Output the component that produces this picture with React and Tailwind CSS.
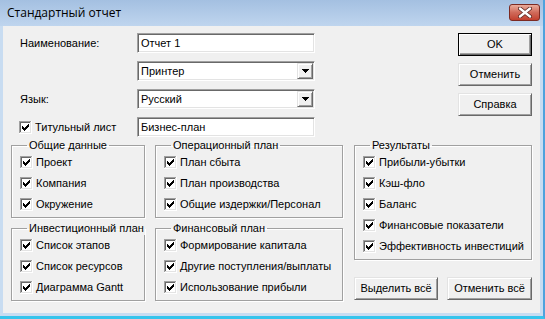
import React from 'react';

const sunken =
  'bg-white border border-t-[#a0a0a0] border-l-[#a0a0a0] border-b-white border-r-white shadow-[inset_1px_1px_0_#696969,inset_-1px_-1px_0_#e3e3e3]';

const raised =
  'bg-[#f0f0f0] border border-t-[#e3e3e3] border-l-[#e3e3e3] border-b-[#696969] border-r-[#696969] shadow-[inset_1px_1px_0_#fff,inset_-1px_-1px_0_#a0a0a0]';

function CheckMark() {
  return (
    <svg width="13" height="13" viewBox="0 0 13 13" shapeRendering="crispEdges" className="shrink-0">
      <rect x="0" y="0" width="13" height="13" fill="#fff" />
      <rect x="0" y="0" width="12" height="1" fill="#a0a0a0" />
      <rect x="0" y="0" width="1" height="12" fill="#a0a0a0" />
      <rect x="1" y="1" width="10" height="1" fill="#696969" />
      <rect x="1" y="1" width="1" height="10" fill="#696969" />
      <rect x="1" y="11" width="11" height="1" fill="#e3e3e3" />
      <rect x="11" y="1" width="1" height="11" fill="#e3e3e3" />
      {/* the tick */}
      <rect x="3" y="5" width="1" height="3" fill="#000" />
      <rect x="4" y="6" width="1" height="3" fill="#000" />
      <rect x="5" y="7" width="1" height="3" fill="#000" />
      <rect x="6" y="6" width="1" height="3" fill="#000" />
      <rect x="7" y="5" width="1" height="3" fill="#000" />
      <rect x="8" y="4" width="1" height="3" fill="#000" />
      <rect x="9" y="3" width="1" height="3" fill="#000" />
    </svg>
  );
}

function Check({ label }) {
  return (
    <label className="flex items-center gap-[3px] h-[13px] leading-[13px] whitespace-nowrap">
      <CheckMark />
      <span>{label}</span>
    </label>
  );
}

function Group({ title, items, className = '' }) {
  return (
    <fieldset
      className={`min-w-0 border border-[#a0a0a0] shadow-[inset_1px_1px_0_#fff,1px_1px_0_#fff] pl-[8px] pt-[4px] pb-[6px] flex flex-col gap-[8px] ${className}`}
    >
      <legend className="ml-[7px] px-[2px] leading-[13px] whitespace-nowrap">{title}</legend>
      {items.map((it) => (
        <Check key={it} label={it} />
      ))}
    </fieldset>
  );
}

function DropArrow() {
  return (
    <div className={`${raised} w-[16px] h-[16px] flex items-center justify-center`}>
      <svg width="7" height="4" viewBox="0 0 7 4" shapeRendering="crispEdges">
        <path d="M0 0h7v1H0zM1 1h5v1H1zM2 2h3v1H2zM3 3h1v1H3z" fill="#000" />
      </svg>
    </div>
  );
}

function TextBox({ value }) {
  return (
    <div className={`${sunken} h-[20px] w-[178px] flex items-center pl-[3px]`}>{value}</div>
  );
}

function Select({ value }) {
  return (
    <div className={`${sunken} h-[20px] w-[178px] flex items-center p-[1px]`}>
      <span className="flex-1 pl-[2px]">{value}</span>
      <DropArrow />
    </div>
  );
}

function Btn({ children, w = 'w-[74px]', isDefault }) {
  if (isDefault) {
    return (
      <div className={`${w} h-[23px] border border-black bg-[#f0f0f0] shadow-[inset_1px_1px_0_#fff,inset_-1px_-1px_0_#696969,inset_-2px_-2px_0_#a0a0a0] flex items-center justify-center`}>
        {children}
      </div>
    );
  }
  return (
    <div className={`${raised} ${w} h-[23px] flex items-center justify-center`}>{children}</div>
  );
}

export default function App() {
  return (
    <div className="w-[545px] h-[319px] flex flex-col bg-[#c8dcf1] border-r-2 border-b-[3px] border-r-[#4fa2dd] border-b-[#36c4ec] font-['Liberation_Sans',Arial,sans-serif] text-[11px] text-black">
      {/* Title bar */}
      <div className="h-[26px] shrink-0 flex items-start justify-between bg-gradient-to-b from-[#a4c0e1] to-[#bfd5ee]">
        <span className="pl-[7px] pt-[6px] text-[12px] leading-[14px] font-['Open_Sans',sans-serif]">
          Стандартный отчет
        </span>
        <div className="mt-[4px] mr-[3px] w-[31px] h-[17px] rounded-[3px] border border-[#7c2a22] bg-gradient-to-b from-[#e9ab9b] via-[#d06a5a] to-[#c2402f] flex items-center justify-center">
          <svg width="14" height="11" viewBox="0 0 14 11">
            <path d="M2 1.5L12 9.5M12 1.5L2 9.5" stroke="#5a2520" strokeWidth="4" strokeLinecap="round" />
            <path d="M2 1.5L12 9.5M12 1.5L2 9.5" stroke="#fff" strokeWidth="2.4" strokeLinecap="round" />
          </svg>
        </div>
      </div>

      {/* Client area */}
      <div className="flex-1 px-[3px] pb-[3px] flex">
        <div className="flex-1 bg-[#f0f0f0] px-[8px] pt-[7px]">
          {/* Top section */}
          <div className="flex justify-between">
            <div className="grid grid-cols-[126px_178px] gap-y-[8px] items-center">
              <span className="pl-[9px]">Наименование:</span>
              <TextBox value="Отчет 1" />
              <span />
              <Select value="Принтер" />
              <span className="pl-[9px]">Язык:</span>
              <Select value="Русский" />
              <div className="pl-[8px]">
                <Check label="Титульный лист" />
              </div>
              <TextBox value="Бизнес-план" />
            </div>
            <div className="flex flex-col gap-[7px]">
              <Btn isDefault>OK</Btn>
              <Btn>Отменить</Btn>
              <Btn>Справка</Btn>
            </div>
          </div>

          {/* Groups */}
          <div className="mt-[2px] flex gap-[10px]">
            <div className="w-[134px] flex flex-col gap-[4px]">
              <Group title="Общие данные" items={['Проект', 'Компания', 'Окружение']} />
              <Group title="Инвестиционный план" items={['Список этапов', 'Список ресурсов', 'Диаграмма Gantt']} />
            </div>
            <div className="w-[188px] flex flex-col gap-[4px]">
              <Group title="Операционный план" items={['План сбыта', 'План производства', 'Общие издержки/Персонал']} />
              <Group title="Финансовый план" items={['Формирование капитала', 'Другие поступления/выплаты', 'Использование прибыли']} />
            </div>
            <div className="w-[178px] ml-[1px] flex flex-col justify-between">
              <Group
                title="Результаты"
                items={['Прибыли-убытки', 'Кэш-фло', 'Баланс', 'Финансовые показатели', 'Эффективность инвестиций']}
              />
              <div className="flex justify-between mb-[1px]">
                <Btn w="w-[84px]">Выделить всё</Btn>
                <Btn w="w-[85px]">Отменить всё</Btn>
              </div>
            </div>
          </div>
        </div>
      </div>
    </div>
  );
}
